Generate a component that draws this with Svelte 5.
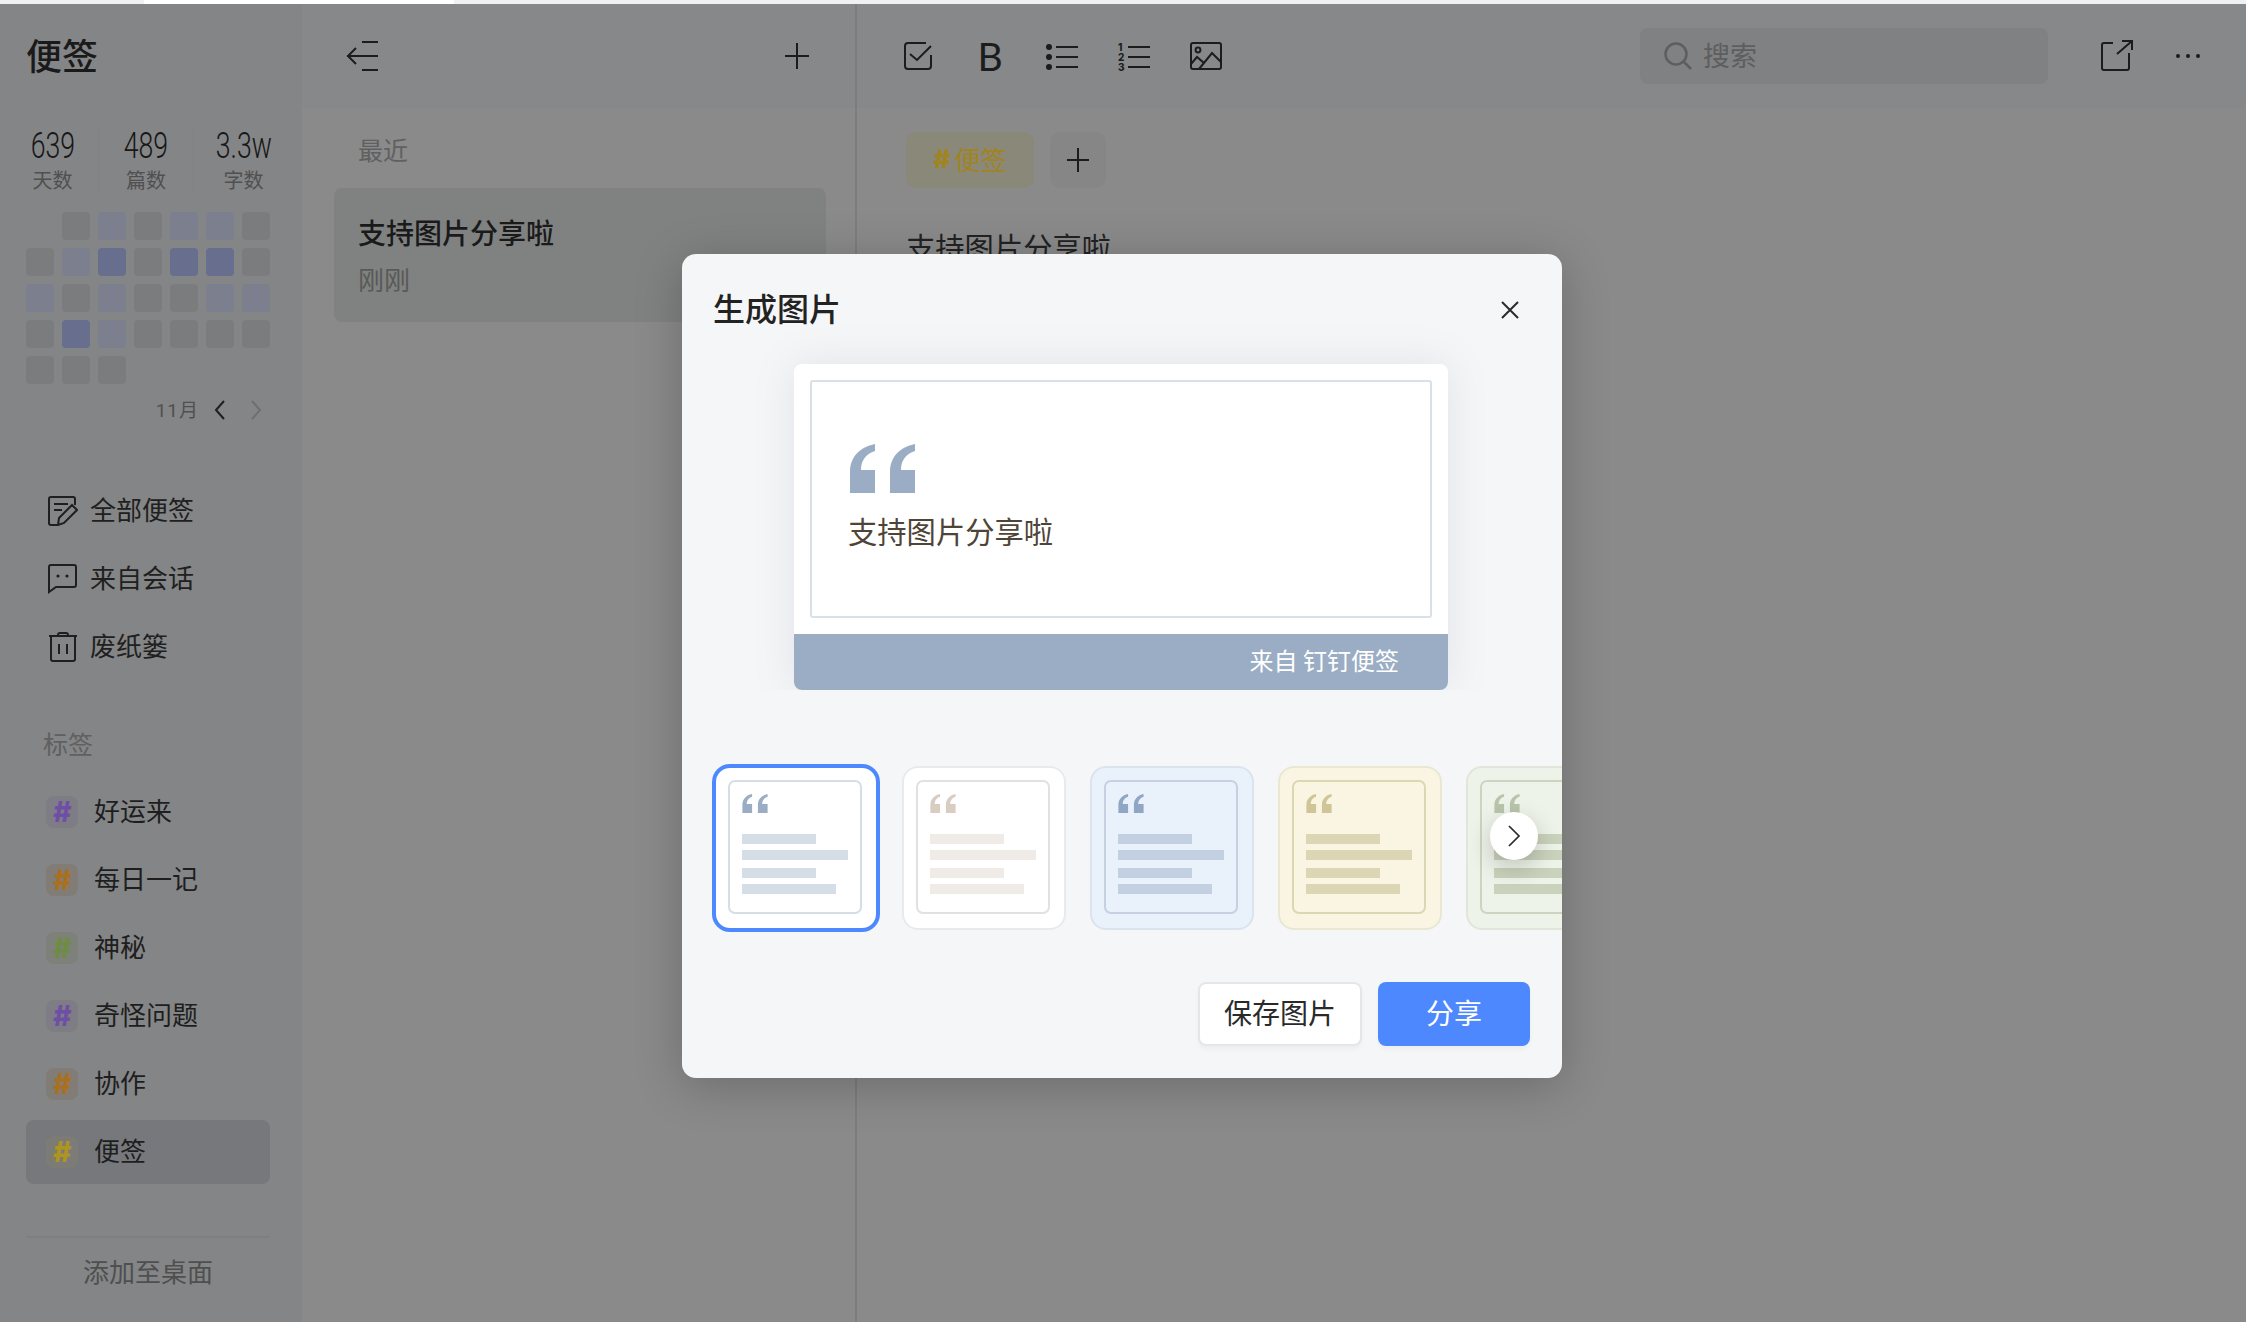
<script>
  const stats = [
    { n: '639', l: '天数' },
    { n: '489', l: '篇数' },
    { n: '3.3w', l: '字数' }
  ];
  const cells = ['e','g','l','g','l','l','g','g','l','d','g','d','d','g','l','g','l','g','g','l','l','g','d','l','g','g','g','g','g','g','g'];
  const tags = [
    { t: '好运来', c: '#6f4fa5', b: '#7e7c85' },
    { t: '每日一记', c: '#a8701f', b: '#827c77' },
    { t: '神秘', c: '#6f8c45', b: '#7d8179' },
    { t: '奇怪问题', c: '#6f4fa5', b: '#7e7c85' },
    { t: '协作', c: '#a8701f', b: '#827c77' },
    { t: '便签', c: '#ae9520', b: '#7c7b76', active: true }
  ];
  const themes = [
    { bg: '#ffffff', border: '#4d88ff', inner: '#d5dde6', quote: '#9aadc4', bar: '#d5dde6', sel: true },
    { bg: '#ffffff', border: '#e8eaed', inner: '#dfe1e2', quote: '#d8cdc0', bar: '#efebe6' },
    { bg: '#e9f1fb', border: '#dbe3ef', inner: '#c5d1e2', quote: '#8fa7c4', bar: '#c3d0e2' },
    { bg: '#faf5e3', border: '#ece7d3', inner: '#ddd6b5', quote: '#cfc596', bar: '#ddd6b5' },
    { bg: '#eef3ea', border: '#e0e6da', inner: '#cdd4c2', quote: '#b8c5ab', bar: '#c9d2bb' }
  ];
  const quotePath = 'M25 0C10 3 0 13 0 28V49H25V26H11C11 16 16 10 25 7Z';
</script>

<div class="app">
  <div class="strip">
    <div class="tab-a"></div>
    <div class="tab-b"></div>
    <div class="tab-c"></div>
  </div>

  <div class="cols">
    <aside class="side">
      <div class="brand">便签</div>

      <div class="stats">
        {#each stats as s}
          <div class="stat">
            <span class="num">{s.n}</span>
            <span class="lab">{s.l}</span>
          </div>
        {/each}
      </div>

      <div class="cal">
        {#each cells as c}
          <i class="cell {c}"></i>
        {/each}
      </div>

      <div class="month">
        <span class="mname">11月</span>
        <svg class="chev" width="12" height="20" viewBox="0 0 12 20"><path d="M10 1L2 10L10 19" fill="none" stroke="#1f1f1f" stroke-width="2"/></svg>
        <svg class="chev" width="12" height="20" viewBox="0 0 12 20"><path d="M2 1L10 10L2 19" fill="none" stroke="#6f6f6f" stroke-width="2"/></svg>
      </div>

      <nav class="nav">
        <div class="nav-item">
          <svg width="30" height="30" viewBox="0 0 30 30" fill="none" stroke="#1f1f1f" stroke-width="2">
            <path d="M27 9V3Q27 1 25 1H3Q1 1 1 3V27Q1 29 3 29H10"/>
            <path d="M6 8H20M6 14H14"/>
            <path d="M24 9L29 14L16 27L10 29L11 22Z"/>
          </svg>
          <span>全部便签</span>
        </div>
        <div class="nav-item">
          <svg width="30" height="30" viewBox="0 0 30 30" fill="none" stroke="#1f1f1f" stroke-width="2">
            <path d="M1 28V3Q1 1 3 1H26Q28 1 28 3V21Q28 23 26 23H8Z"/>
            <circle cx="10" cy="12" r="1.6" fill="#1f1f1f" stroke="none"/>
            <circle cx="19" cy="12" r="1.6" fill="#1f1f1f" stroke="none"/>
          </svg>
          <span>来自会话</span>
        </div>
        <div class="nav-item">
          <svg width="30" height="30" viewBox="0 0 30 30" fill="none" stroke="#1f1f1f" stroke-width="2">
            <path d="M1 4H29M10 4V3Q10 1 12 1H18Q20 1 20 3V4"/>
            <path d="M3 4V27Q3 29 5 29H25Q27 29 27 27V4"/>
            <path d="M11 12V22M19 12V22"/>
          </svg>
          <span>废纸篓</span>
        </div>
      </nav>

      <div class="tags-title">标签</div>

      <div class="tags">
        {#each tags as t}
          <div class="tag" class:active={t.active}>
            <span class="hash" style="color:{t.c};background:{t.b}">#</span>
            <span class="tag-name">{t.t}</span>
          </div>
        {/each}
      </div>

      <div class="foot">添加至桌面</div>
    </aside>

    <section class="list">
      <header class="list-head">
        <svg width="32" height="32" viewBox="0 0 32 32" fill="none" stroke="#1c1c1c" stroke-width="2">
          <path d="M16 2H32M16 30H32M1 16H32M10 8L2 16L10 24"/>
        </svg>
        <svg width="26" height="26" viewBox="0 0 26 26" fill="none" stroke="#1c1c1c" stroke-width="2">
          <path d="M13 0V26M1 13H25"/>
        </svg>
      </header>
      <div class="list-label">最近</div>
      <div class="note">
        <div class="note-title">支持图片分享啦</div>
        <div class="note-time">刚刚</div>
      </div>
    </section>

    <main class="main">
      <header class="tools">
        <svg class="tool" width="32" height="32" viewBox="0 0 32 32" fill="none" stroke="#1c1c1c" stroke-width="2">
          <path d="M24 3H6Q3 3 3 6V26Q3 29 6 29H26Q29 29 29 26V15"/>
          <path d="M8 14L15 20L29 6"/>
        </svg>
        <span class="tool bold">B</span>
        <svg class="tool" width="32" height="32" viewBox="0 0 32 32" fill="none" stroke="#1c1c1c" stroke-width="2">
          <circle cx="3" cy="7" r="3" fill="#1c1c1c" stroke="none"/>
          <circle cx="3" cy="17" r="3" fill="#1c1c1c" stroke="none"/>
          <circle cx="3" cy="27" r="3" fill="#1c1c1c" stroke="none"/>
          <path d="M10 7H32M10 17H32M10 27H32"/>
        </svg>
        <svg class="tool" width="32" height="32" viewBox="0 0 32 32" fill="none" stroke="#1c1c1c" stroke-width="2">
          <text class="ol" x="0" y="11">1</text>
          <text class="ol" x="0" y="21">2</text>
          <text class="ol" x="0" y="31">3</text>
          <path d="M10 7H32M10 17H32M10 27H32"/>
        </svg>
        <svg class="tool" width="32" height="32" viewBox="0 0 32 32" fill="none" stroke="#1c1c1c" stroke-width="2">
          <rect x="1" y="3" width="30" height="26" rx="2"/>
          <circle cx="8" cy="10" r="2.4"/>
          <path d="M1 24L7 17L14 23M9 29L22 13L31 22"/>
        </svg>

        <div class="search">
          <svg width="28" height="28" viewBox="0 0 28 28" fill="none" stroke="#5d5e5e" stroke-width="2.5">
            <circle cx="12" cy="12" r="10.5"/><path d="M19.5 19.5L27 27"/>
          </svg>
          <span class="search-text">搜索</span>
        </div>

        <svg class="tool act" width="32" height="32" viewBox="0 0 32 32" fill="none" stroke="#1c1c1c" stroke-width="2">
          <path d="M12 3H3Q1 3 1 5V28Q1 30 3 30H26Q28 30 28 28V13"/>
          <path d="M16 14L31 1M21 1H31V10"/>
        </svg>
        <svg class="tool more" width="32" height="32" viewBox="0 0 32 32" fill="#1c1c1c">
          <circle cx="5" cy="16" r="2"/><circle cx="15" cy="16" r="2"/><circle cx="25" cy="16" r="2"/>
        </svg>
      </header>

      <div class="doc">
        <div class="doc-tags">
          <span class="doc-tag"><b>#</b>便签</span>
          <span class="doc-add">
            <svg width="22" height="24" viewBox="0 0 22 24" fill="none" stroke="#1c1c1c" stroke-width="2"><path d="M11 0V24M0 12H22"/></svg>
          </span>
        </div>
        <div class="doc-text">支持图片分享啦</div>
      </div>
    </main>
  </div>

  <div class="modal">
    <div class="m-head">
      <span class="m-title">生成图片</span>
      <svg width="24" height="24" viewBox="0 0 24 24" fill="none" stroke="#2a2a2a" stroke-width="2"><path d="M4 4L20 20M20 4L4 20"/></svg>
    </div>

    <div class="clip">
      <div class="card">
        <div class="frame">
          <svg class="bigq" width="65" height="49" viewBox="0 0 65 49" fill="#9aadc4">
            <path d={quotePath}/><path d={quotePath} transform="translate(40 0)"/>
          </svg>
          <div class="frame-text">支持图片分享啦</div>
        </div>
        <div class="card-foot">来自 钉钉便签</div>
      </div>
    </div>

    <div class="thumbs">
      {#each themes as th}
        <div class="thumb" class:sel={th.sel} style="background:{th.bg};border-color:{th.border}">
          <div class="inner" style="border-color:{th.inner}">
            <svg width="26" height="19" viewBox="0 0 65 49" fill={th.quote}>
              <path d={quotePath}/><path d={quotePath} transform="translate(40 0)"/>
            </svg>
            <div class="bars">
              <i style="background:{th.bar}"></i>
              <i style="background:{th.bar}"></i>
              <i style="background:{th.bar}"></i>
              <i style="background:{th.bar}"></i>
            </div>
          </div>
        </div>
      {/each}
    </div>

    <span class="next">
      <svg width="14" height="22" viewBox="0 0 14 22" fill="none" stroke="#2a2a2a" stroke-width="1.7"><path d="M2 1L12 11L2 21"/></svg>
    </span>

    <div class="m-btns">
      <button class="btn save">保存图片</button>
      <button class="btn share">分享</button>
    </div>
  </div>
</div>

<style>
  :global(body) {
    margin: 0;
    background: #8a8a8a;
  }
  .app {
    position: relative;
    width: 2246px;
    height: 1322px;
    overflow: hidden;
    display: flex;
    flex-direction: column;
    font-family: "Noto Sans CJK SC", "Noto Sans", sans-serif;
    color: #1e1e1e;
    background: #8a8a8a;
  }
  .strip {
    display: flex;
    height: 4px;
    flex: none;
  }
  .tab-a { width: 144px; background: #f0f1f5; }
  .tab-b { width: 310px; background: #fff; }
  .tab-c { flex: 1; background: #f0f1f5; }
  .cols {
    flex: 1;
    display: flex;
    min-height: 0;
  }

  /* sidebar */
  .side {
    width: 302px;
    flex: none;
    display: flex;
    flex-direction: column;
    background: #848586;
  }
  .brand {
    height: 104px;
    flex: none;
    box-sizing: border-box;
    display: flex;
    align-items: center;
    padding: 0 0 4px 26px;
    font-size: 36px;
    font-weight: 500;
    color: #1a1a1a;
  }
  .stats {
    margin: 20px 0 0 7px;
    display: grid;
    grid-template-columns: 93px 94px 99px;
  }
  .stat {
    display: flex;
    flex-direction: column;
    align-items: center;
    height: 66px;
    border-right: 2px solid #828384;
  }
  .stat:last-child { border-right: 0; }
  .num {
    display: inline-block;
    height: 36px;
    line-height: 36px;
    font-family: Roboto, sans-serif;
    font-size: 36px;
    font-weight: 300;
    transform: scaleX(.74);
    color: #171717;
  }
  .lab {
    margin-top: 2px;
    line-height: 28px;
    font-size: 20px;
    color: #505050;
  }
  .cal {
    margin: 18px 0 0 26px;
    display: grid;
    grid-template-columns: repeat(7, 28px);
    grid-auto-rows: 28px;
    gap: 8px;
  }
  .cell { border-radius: 4px; display: block; }
  .cell.g { background: #7b7c7d; }
  .cell.l { background: #7c7f8d; }
  .cell.d { background: #686f8e; }
  .cell.e { background: transparent; }
  .month {
    margin-top: 12px;
    height: 28px;
    display: flex;
    align-items: center;
    justify-content: flex-end;
    padding-right: 40px;
    gap: 24px;
  }
  .mname {
    padding-bottom: 4px;
    font-family: Roboto, "Noto Sans CJK SC", sans-serif;
    font-size: 19px;
    letter-spacing: 1px;
    color: #505050;
    margin-right: -9px;
  }
  .nav {
    margin-top: 53px;
    padding-left: 48px;
    display: flex;
    flex-direction: column;
  }
  .nav-item {
    height: 68px;
    display: flex;
    align-items: center;
    gap: 12px;
    font-size: 26px;
    color: #202020;
  }
  .nav-item span { padding-bottom: 5px; }
  .tags-title {
    margin-top: 47px;
    padding-left: 43px;
    height: 34px;
    line-height: 30px;
    font-size: 25px;
    color: #606060;
  }
  .tags {
    margin: 18px 32px 0 26px;
    display: flex;
    flex-direction: column;
    gap: 4px;
  }
  .tag {
    height: 64px;
    padding-left: 20px;
    display: flex;
    align-items: center;
    gap: 17px;
    font-size: 26px;
    color: #1e1e1e;
    border-radius: 8px;
  }
  .tag-name { padding-bottom: 5px; margin-left: -1px; }
  .tag.active { background: #77787c; }
  .hash {
    width: 32px;
    height: 32px;
    border-radius: 8px;
    display: flex;
    align-items: center;
    justify-content: center;
    font-family: Inter, sans-serif;
    font-size: 28px;
    font-weight: 800;
    font-style: italic;
  }
  .foot {
    margin: auto 32px 0 26px;
    height: 86px;
    padding-top: 15px;
    box-sizing: border-box;
    border-top: 2px solid #7e7f80;
    text-align: center;
    line-height: 36px;
    font-size: 26px;
    color: #4f4f4f;
  }

  /* list column */
  .list {
    width: 555px;
    flex: none;
    box-sizing: border-box;
    border-right: 2px solid #7d7d7e;
    background: #8a8a8a;
  }
  .list-head {
    height: 104px;
    box-sizing: border-box;
    padding: 0 45px 0 44px;
    display: flex;
    align-items: center;
    justify-content: space-between;
    background: #87888a;
  }
  .list-label {
    margin: 23px 0 21px 56px;
    line-height: 36px;
    font-size: 25px;
    color: #606060;
  }
  .note {
    margin-left: 32px;
    width: 492px;
    height: 134px;
    box-sizing: border-box;
    padding: 26px 0 0 24px;
    border-radius: 8px;
    background: #808281;
  }
  .note-title {
    line-height: 36px;
    font-size: 28px;
    font-weight: 500;
    color: #1a1a1a;
  }
  .note-time {
    margin-top: 11px;
    line-height: 36px;
    font-size: 26px;
    color: #585958;
  }

  /* editor */
  .main {
    flex: 1;
    min-width: 0;
    display: flex;
    flex-direction: column;
  }
  .tools {
    height: 104px;
    flex: none;
    box-sizing: border-box;
    padding: 0 42px 0 45px;
    display: flex;
    align-items: center;
    gap: 40px;
    background: #87888a;
  }
  .tool {
    width: 32px;
    height: 32px;
    flex: none;
  }
  .ol {
    font-family: Inter, sans-serif;
    font-size: 10px;
    font-weight: 800;
    fill: #1c1c1c;
    stroke: none;
  }
  .bold {
    display: flex;
    align-items: center;
    justify-content: center;
    font-family: Lato, sans-serif;
    font-size: 39px;
    font-weight: 400;
    color: #1c1c1c;
    line-height: 32px;
  }
  .search {
    margin-left: 378px;
    width: 408px;
    height: 56px;
    box-sizing: border-box;
    padding-left: 24px;
    display: flex;
    align-items: center;
    gap: 11px;
    border-radius: 8px;
    background: #808182;
    font-size: 27px;
    color: #5d5e5e;
    flex: none;
  }
  .search-text { padding-bottom: 4px; }
  .act { margin-left: 13px; }
  .more { margin-left: 0; }
  .doc {
    padding: 24px 0 0 49px;
  }
  .doc-tags {
    display: flex;
    gap: 16px;
  }
  .doc-tag {
    width: 128px;
    height: 56px;
    box-sizing: border-box;
    padding-bottom: 3px;
    border-radius: 10px;
    background: #8a8878;
    display: flex;
    align-items: center;
    justify-content: center;
    font-size: 26px;
    color: #a0841f;
  }
  .doc-tag b {
    font-family: Inter, sans-serif;
    font-weight: 800;
    margin-right: 4px;
  }
  .doc-add {
    width: 56px;
    height: 56px;
    border-radius: 10px;
    background: #868686;
    display: flex;
    align-items: center;
    justify-content: center;
  }
  .doc-text {
    margin-top: 38px;
    line-height: 40px;
    font-size: 29.3px;
    color: #222;
  }

  /* modal */
  .modal {
    position: absolute;
    left: 682px;
    top: 254px;
    width: 880px;
    height: 824px;
    overflow: hidden;
    border-radius: 14px;
    background: #f5f6f8;
    box-shadow: 0 8px 48px rgba(0, 0, 0, .22);
  }
  .m-head {
    height: 110px;
    box-sizing: border-box;
    padding: 31px 40px 0 31px;
    display: flex;
    justify-content: space-between;
    align-items: flex-start;
  }
  .m-head svg { margin-top: 13px; }
  .m-title {
    line-height: 44px;
    font-size: 32px;
    font-weight: 500;
    color: #222;
  }
  .clip {
    margin: -40px 0 0 52px;
    padding: 40px 60px 0;
    width: 654px;
    overflow: hidden;
  }
  .card {
    width: 654px;
    height: 326px;
    box-sizing: border-box;
    padding-top: 16px;
    display: flex;
    flex-direction: column;
    background: #fff;
    border-radius: 8px;
    overflow: hidden;
    box-shadow: 0 0 40px rgba(120, 130, 145, .16);
  }
  .frame {
    margin: 0 16px;
    height: 238px;
    flex: none;
    box-sizing: border-box;
    border: 2px solid #d8e0e8;
    border-radius: 3px;
    padding: 62px 0 0 38px;
  }
  .bigq { display: block; }
  .frame-text {
    margin: 17px 0 0 -2px;
    line-height: 40px;
    font-size: 29.3px;
    color: #4f4438;
  }
  .card-foot {
    margin-top: 16px;
    height: 56px;
    flex: none;
    box-sizing: border-box;
    padding: 0 49px 5px 0;
    display: flex;
    align-items: center;
    justify-content: flex-end;
    background: #9aadc4;
    font-size: 24px;
    color: #fff;
  }
  .thumbs {
    margin-top: 76px;
    padding-left: 32px;
    display: flex;
    gap: 24px;
  }
  .thumb {
    width: 164px;
    height: 164px;
    flex: none;
    box-sizing: border-box;
    padding: 12px;
    border: 2px solid;
    border-radius: 16px;
  }
  .thumb.sel { box-shadow: 0 0 0 2px #4d88ff; }
  .inner {
    width: 134px;
    height: 134px;
    box-sizing: border-box;
    padding: 12px;
    border: 2px solid;
    border-radius: 7px;
  }
  .inner svg { display: block; }
  .bars {
    margin-top: 21px;
    display: flex;
    flex-direction: column;
  }
  .bars i {
    display: block;
    height: 10px;
    width: 74px;
    margin-bottom: 6px;
  }
  .bars i:nth-child(2) { width: 106px; margin-bottom: 8px; }
  .bars i:nth-child(4) { width: 94px; }
  .next {
    position: absolute;
    left: 808px;
    top: 558px;
    width: 48px;
    height: 48px;
    border-radius: 50%;
    background: #fff;
    display: flex;
    align-items: center;
    justify-content: center;
    box-shadow: 0 8px 24px rgba(0, 0, 0, .2);
  }
  .m-btns {
    margin-top: 52px;
    padding-right: 32px;
    display: flex;
    justify-content: flex-end;
    gap: 16px;
  }
  .btn {
    height: 64px;
    box-sizing: border-box;
    border-radius: 8px;
    font-family: inherit;
    font-size: 28px;
    padding: 0 0 4px;
    box-shadow: 0 4px 4px rgba(0, 0, 0, .03);
  }
  .save {
    width: 164px;
    border: 2px solid #e5e6e8;
    background: #fff;
    color: #2a2a2a;
  }
  .share {
    width: 152px;
    border: 0;
    background: #4d88ff;
    color: #fff;
  }
</style>
